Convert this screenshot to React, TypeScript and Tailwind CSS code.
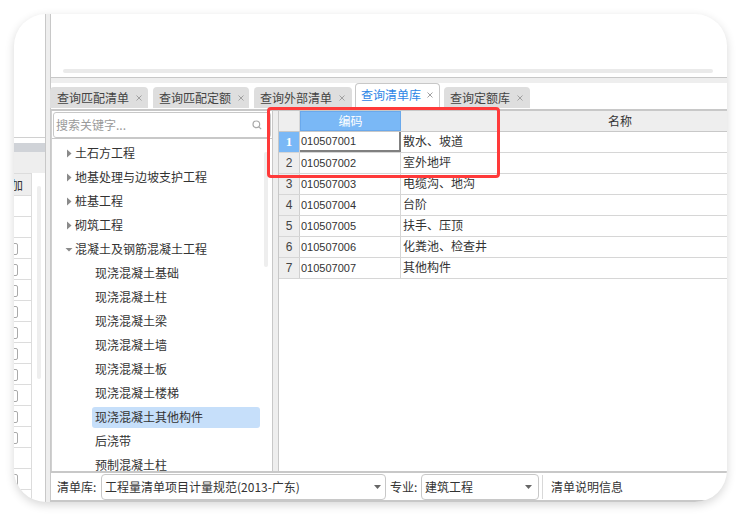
const font = { fontFamily: '"Noto Sans CJK SC", "Liberation Sans", sans-serif' };

function Tab({ label, w, active, mr, pl }: { label: string; w: string; active?: boolean; mr: string; pl: string }) {
  return (
    <div
      className={`${w} ${mr} ${pl} flex shrink-0 items-center rounded-t-[4px] text-[12px] leading-none ${
        active
          ? "h-[26px] border border-b-0 border-[#c8c8c8] bg-white pb-[4px] text-[#2e86e6]"
          : "mb-[1px] h-[21px] bg-[#dedede] text-[#444]"
      }`}
    >
      <span className="whitespace-nowrap">{label}</span>
      <svg width="6" height="6" viewBox="0 0 6 6" className={`${active ? "ml-[6px]" : "ml-[7px]"} shrink-0`} stroke="#a0a0a0" strokeWidth="1" fill="none">
        <path d="M0.5 0.5 L5.5 5.5 M5.5 0.5 L0.5 5.5" />
      </svg>
    </div>
  );
}

function TreeItem({ label, kind }: { label: string; kind: "closed" | "open" | "leaf" | "selected" }) {
  if (kind === "leaf" || kind === "selected") {
    return (
      <div className="flex h-[24px] items-center pl-[40px] pr-[12px]">
        <div
          className={`flex h-[21px] flex-1 items-center rounded-[3px] pl-[3px] text-[12px] leading-none text-[#333] ${
            kind === "selected" ? "bg-[#c6dffa]" : ""
          }`}
        >
          {label}
        </div>
      </div>
    );
  }
  return (
    <div className="flex h-[24px] items-center pl-[13px] text-[12px] leading-none text-[#333]">
      <svg width="8" height="9" viewBox="0 0 8 9" className="mr-[2px] shrink-0">
        {kind === "closed" ? <path d="M2 0.5 L6.5 4.5 L2 8.5 Z" fill="#8a8a8a" /> : <path d="M0.5 3 L7.5 3 L4 6.5 Z" fill="#8a8a8a" />}
      </svg>
      {label}
    </div>
  );
}

function GridRow({ n, code, name, active }: { n: number; code: string; name: string; active?: boolean }) {
  return (
    <div className="flex h-[21px] border-b border-[#d6d6d6]">
      <div
        className={`flex w-[21px] shrink-0 items-center justify-center border-r border-[#d0d0d0] ${
          active ? "bg-[#7ab8f6] text-[13px] font-bold text-white" : "bg-[#eeeeee] text-[12px] text-[#444]"
        }`}
        style={{ fontFamily: active ? '"Liberation Serif", serif' : '"Liberation Sans", sans-serif' }}
      >
        {n}
      </div>
      <div
        className={`flex w-[101px] shrink-0 items-center pl-[1px] text-[11px] text-[#333] ${
          active ? "border-r-2 border-b-2 border-[#808080]" : "border-r border-[#d6d6d6]"
        }`}
        style={{ fontFamily: '"Liberation Sans", sans-serif' }}
      >
        {code}
      </div>
      <div className="flex flex-1 items-center pb-[2px] pl-[2px] text-[12px] text-[#333]">{name}</div>
    </div>
  );
}

function LeftRow({ box }: { box?: boolean }) {
  return (
    <div className="flex h-[21px] w-[18px] shrink-0 items-center border-r border-b border-[#dcdcdc]">
      {box && <div className="ml-[-5px] mt-[2px] h-[12px] w-[9px] rounded-[2px] border border-[#aaa] bg-white" />}
    </div>
  );
}

export default function App() {
  const tree: [string, "closed" | "open" | "leaf" | "selected"][] = [
    ["土石方工程", "closed"],
    ["地基处理与边坡支护工程", "closed"],
    ["桩基工程", "closed"],
    ["砌筑工程", "closed"],
    ["混凝土及钢筋混凝土工程", "open"],
    ["现浇混凝土基础", "leaf"],
    ["现浇混凝土柱", "leaf"],
    ["现浇混凝土梁", "leaf"],
    ["现浇混凝土墙", "leaf"],
    ["现浇混凝土板", "leaf"],
    ["现浇混凝土楼梯", "leaf"],
    ["现浇混凝土其他构件", "selected"],
    ["后浇带", "leaf"],
    ["预制混凝土柱", "leaf"],
  ];
  const rows = [
    ["010507001", "散水、坡道"],
    ["010507002", "室外地坪"],
    ["010507003", "电缆沟、地沟"],
    ["010507004", "台阶"],
    ["010507005", "扶手、压顶"],
    ["010507006", "化粪池、检查井"],
    ["010507007", "其他构件"],
  ];
  const boxes = [false, false, true, true, true, true, true, true, true, true, true, true, false, true, false];
  return (
    <div className="h-[522px] w-[741px] bg-white pl-[14px] pr-[14px] pt-[14px]" style={font}>
      <div className="relative flex h-[488px] w-[713px] overflow-hidden rounded-[32px] bg-white shadow-[0_3px_10px_rgba(0,0,0,0.16)]">
        {/* left column */}
        <div className="flex w-[32px] shrink-0 flex-col border-r border-[#c8c8c8]">
          <div className="h-[124px] shrink-0 border-b border-[#d0d0d0]" />
          <div className="h-[5px] shrink-0" />
          <div className="h-[9px] shrink-0 bg-[#d0d3d8]" />
          <div className="h-[21px] shrink-0 bg-[#eeeeee]" />
          <div className="flex flex-1 overflow-hidden">
            <div className="flex w-[18px] shrink-0 flex-col">
              <div className="flex h-[23px] shrink-0 items-center justify-end border-y border-r border-[#dcdcdc] bg-[#eeeeee] pr-[8px] text-[12px] leading-none text-[#333]">
                <span className="whitespace-nowrap">加</span>
              </div>
              {boxes.map((b, i) => (
                <LeftRow key={i} box={b} />
              ))}
            </div>
            <div className="ml-[5px] mt-[13px] h-[193px] w-[4px] rounded-full bg-[#eeeeee]" />
          </div>
        </div>
        <div className="w-[4px] shrink-0 bg-[#eeeeee]" />
        {/* main */}
        <div className="flex min-w-0 flex-1 flex-col border-l border-[#c8c8c8]">
          <div className="flex h-[64px] shrink-0 flex-col justify-end border-b border-[#c8c8c8] pb-[4px] pl-[12px] pr-[14px]">
            <div className="h-[4px] rounded-full bg-[#eaeaea]" />
          </div>
          <div className="h-[5px] shrink-0 bg-[#eeeeee]" />
          <div className="ml-[-1px] flex h-[26px] shrink-0 items-end">
            <Tab label="查询匹配清单" w="w-[98px]" mr="mr-[5px]" pl="pl-[7px]" />
            <Tab label="查询匹配定额" w="w-[96px]" mr="mr-[5px]" pl="pl-[6px]" />
            <Tab label="查询外部清单" w="w-[98px]" mr="mr-[3px]" pl="pl-[6px]" />
            <Tab label="查询清单库" w="w-[85px]" mr="mr-[4px]" pl="pl-[5px]" active />
            <Tab label="查询定额库" w="w-[86px]" mr="mr-0" pl="pl-[6px]" />
          </div>
          <div className="flex min-h-0 flex-1 border-t-2 border-[#c8c8c8]">
            {/* tree */}
            <div className="flex w-[221px] shrink-0 flex-col border-l border-[#d0d0d0]">
              <div className="flex h-[28px] shrink-0 items-center border-b border-[#c8c8c8] px-[1px]">
                <div className="flex h-[26px] w-full items-center justify-between rounded-[3px] border border-[#c8c8c8] pl-[2px] pr-[8px] text-[12px] text-[#9a9a9a]">
                  <span>搜索关键字...</span>
                  <svg width="10" height="10" viewBox="0 0 12 12" fill="none" stroke="#aaa" strokeWidth="1.4">
                    <circle cx="5.2" cy="5.2" r="4" />
                    <path d="M8.2 8.2 L11 11" />
                  </svg>
                </div>
              </div>
              <div className="relative min-h-0 flex-1 overflow-hidden">
                <div className="pt-[2px]">
                  {tree.map(([l, k]) => (
                    <TreeItem key={l} label={l} kind={k} />
                  ))}
                </div>
                <div className="absolute right-[4px] top-[13px] h-[115px] w-[4px] rounded-full bg-[#eeeeee]" />
              </div>
            </div>
            <div className="w-[7px] shrink-0 border-x border-[#c8c8c8] bg-[#eeeeee]" />
            {/* grid */}
            <div className="flex min-w-0 flex-1 flex-col">
              <div className="flex h-[21px] shrink-0 border-b border-[#c8c8c8] bg-[#eeeeee] text-[12px] text-[#333]">
                <div className="w-[21px] shrink-0 border-r border-[#d6d6d6]" />
                <div className="flex w-[101px] shrink-0 items-center justify-center border border-[#6aa9ec] bg-[#7ab8f6] text-white">编码</div>
                <div className="flex flex-1 items-center justify-center pl-[112px]">名称</div>
              </div>
              {rows.map((r, i) => (
                <GridRow key={r[0]} n={i + 1} code={r[0]} name={r[1]} active={i === 0} />
              ))}
            </div>
          </div>
          {/* toolbar */}
          <div className="flex h-[31px] shrink-0 items-center border-y-2 border-[#c8c8c8] pl-[6px] text-[12px] text-[#333]">
            <span className="w-[44px] shrink-0">清单库:</span>
            <div className="flex h-[26px] w-[285px] shrink-0 items-center justify-between rounded-[4px] border border-[#c8c8c8] px-[3px]">
              <span>工程量清单项目计量规范(2013-广东)</span>
              <svg width="7" height="4" viewBox="0 0 7 4" className="mr-[1px]">
                <path d="M0 0 H7 L3.5 4 Z" fill="#666" />
              </svg>
            </div>
            <span className="ml-[4px] w-[31px] shrink-0">专业:</span>
            <div className="flex h-[26px] w-[118px] shrink-0 items-center justify-between rounded-[4px] border border-[#c8c8c8] px-[3px]">
              <span>建筑工程</span>
              <svg width="7" height="4" viewBox="0 0 7 4" className="mr-[3px]">
                <path d="M0 0 H7 L3.5 4 Z" fill="#666" />
              </svg>
            </div>
            <div className="ml-[3px] h-[24px] w-px bg-[#d8d8d8]" />
            <span className="ml-[8px]">清单说明信息</span>
          </div>
        </div>
        <div className="absolute left-[253px] top-[93px] h-[71px] w-[233px] rounded-[4px] border-[3px] border-[#ff3a3a]" />
      </div>
    </div>
  );
}
